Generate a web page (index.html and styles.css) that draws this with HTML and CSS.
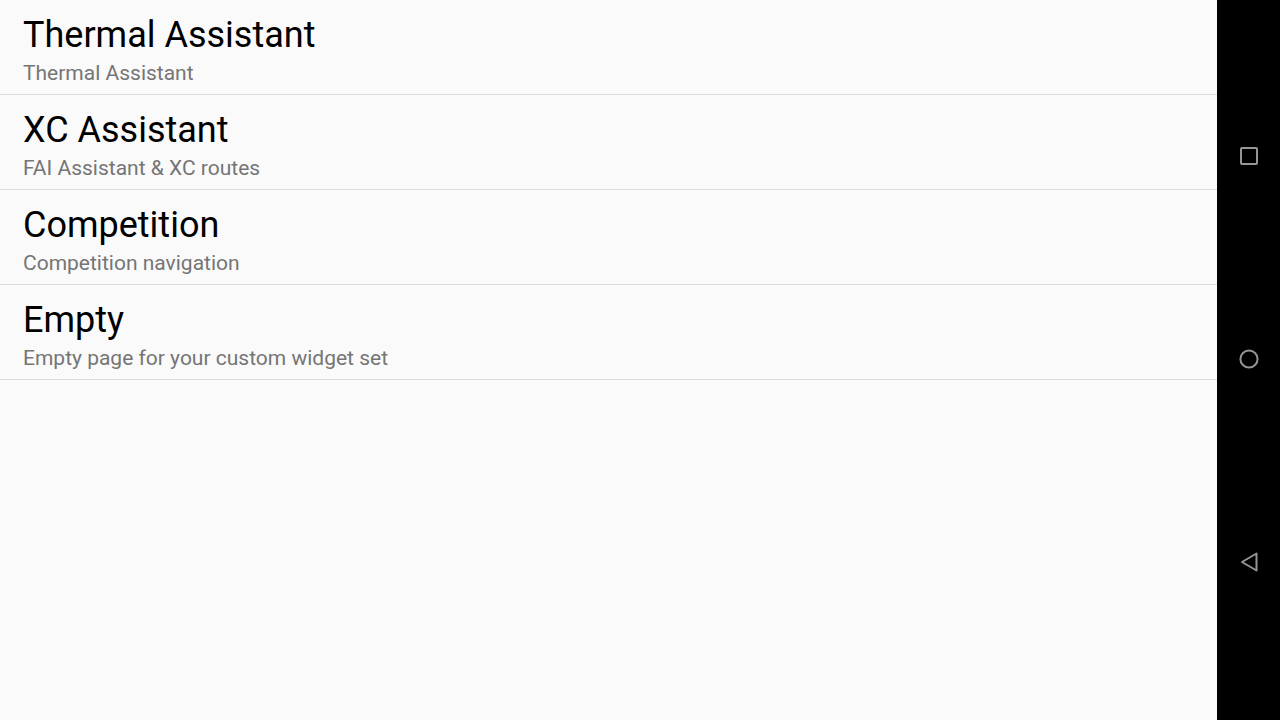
FILE: index.html
```html
<!DOCTYPE html>
<html>
<head>
<meta charset="utf-8">
<link rel="stylesheet" href="styles.css">
</head>
<body>
<div class="screen">
  <main class="list">
    <div class="item">
      <div class="title">Thermal Assistant</div>
      <div class="subtitle">Thermal Assistant</div>
    </div>
    <div class="item">
      <div class="title">XC Assistant</div>
      <div class="subtitle">FAI Assistant &amp; XC routes</div>
    </div>
    <div class="item">
      <div class="title">Competition</div>
      <div class="subtitle">Competition navigation</div>
    </div>
    <div class="item">
      <div class="title">Empty</div>
      <div class="subtitle">Empty page for your custom widget set</div>
    </div>
  </main>
  <nav class="navbar">
    <svg class="navicon" width="24" height="24" viewBox="0 0 24 24">
      <rect x="4" y="4" width="16" height="16" rx="1" fill="none" stroke="#959595" stroke-width="2"/>
    </svg>
    <svg class="navicon" width="24" height="24" viewBox="0 0 24 24">
      <circle cx="12" cy="12" r="8.6" fill="none" stroke="#959595" stroke-width="2"/>
    </svg>
    <svg class="navicon" width="24" height="24" viewBox="0 0 24 24">
      <path d="M5 12 L19.5 3.5 L19.5 20.5 Z" fill="none" stroke="#959595" stroke-width="2" stroke-linejoin="round"/>
    </svg>
  </nav>
</div>
</body>
</html>
```
FILE: styles.css
```css
html, body {
  margin: 0;
  padding: 0;
  width: 1280px;
  height: 720px;
  overflow: hidden;
  font-family: Roboto, "Liberation Sans", sans-serif;
}
.screen {
  display: flex;
  width: 1280px;
  height: 720px;
}
.list {
  flex: 0 0 1217px;
  background: #fafafa;
  display: flex;
  flex-direction: column;
}
.item {
  height: 94px;
  border-bottom: 1px solid #dcdcdc;
  padding-left: 23px;
  box-sizing: content-box;
  display: flex;
  flex-direction: column;
}
.title {
  font-size: 36px;
  line-height: 44px;
  margin-top: 13px;
  color: #000;
}
.subtitle {
  font-size: 21px;
  line-height: 24px;
  margin-top: 4px;
  color: #757575;
}
.navbar {
  flex: 1;
  background: #000;
  display: flex;
  flex-direction: column;
  align-items: center;
  justify-content: space-between;
  padding: 144px 0 146px;
}
.navicon {
  display: block;
  width: 24px;
  height: 24px;
}
```
